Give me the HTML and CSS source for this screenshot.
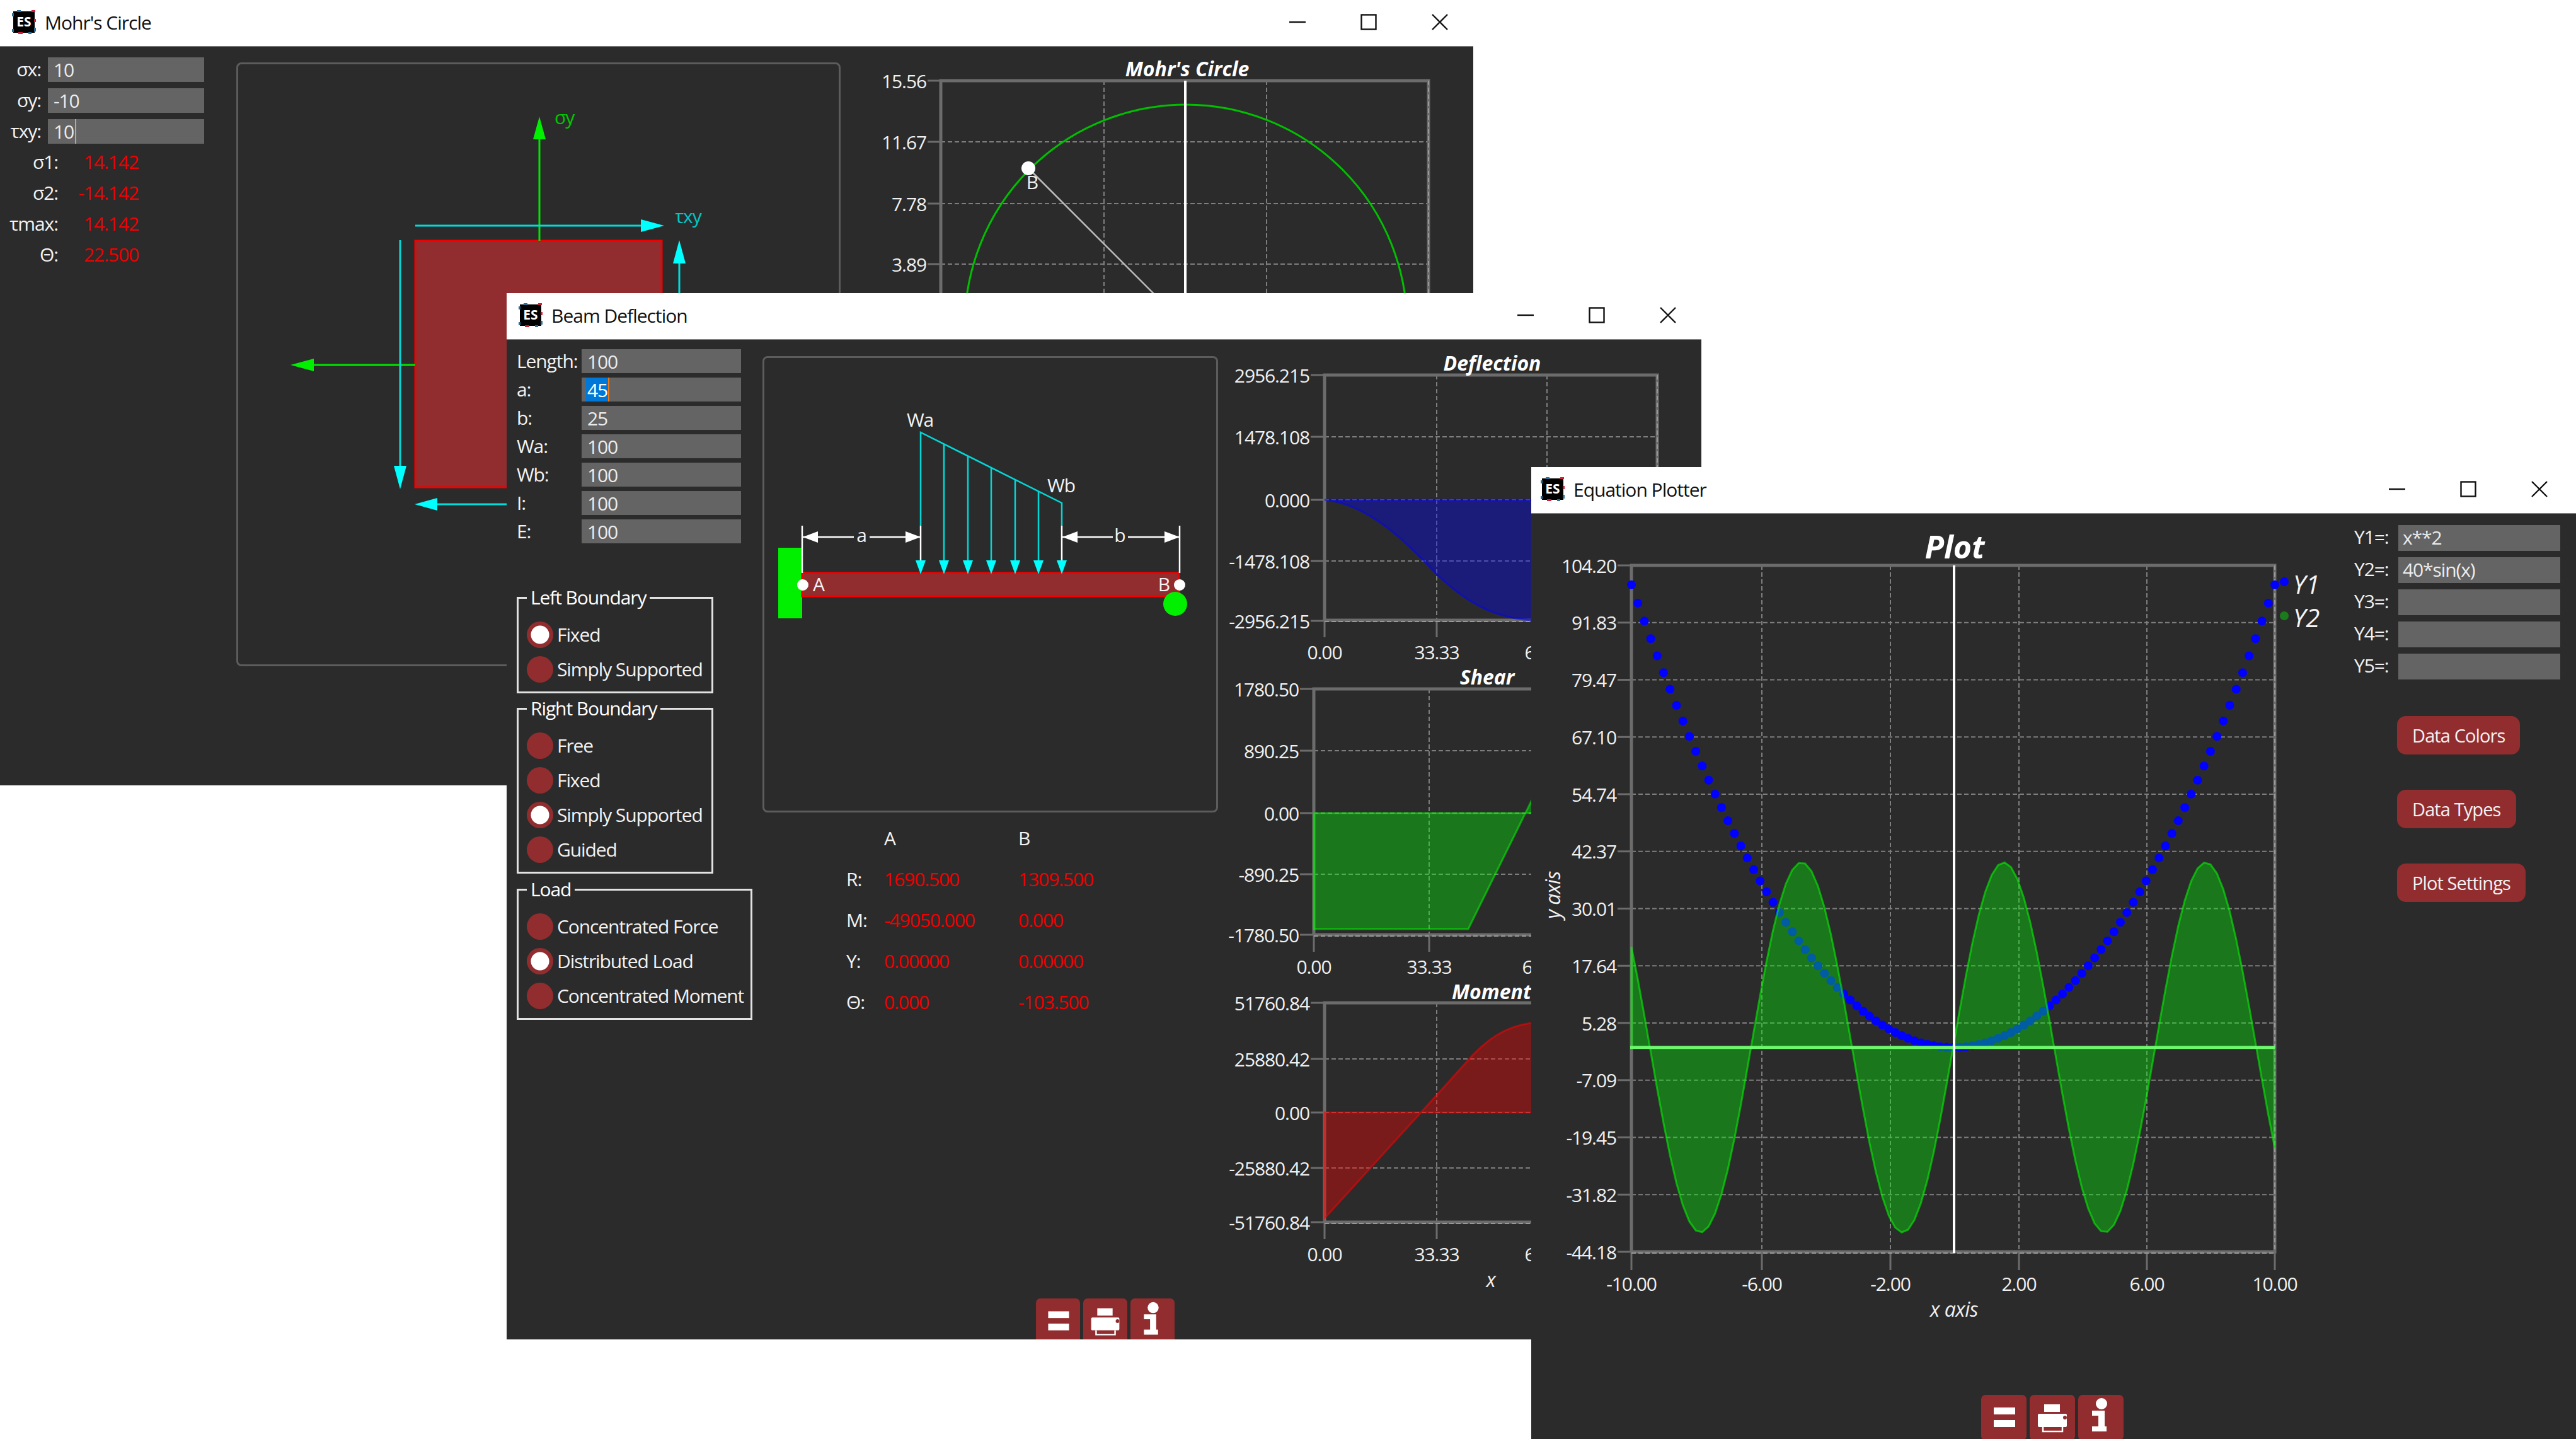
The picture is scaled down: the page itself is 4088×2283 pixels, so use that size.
FILE: index.html
```html
<!DOCTYPE html>
<html lang="en">
<head>
    <title>Engineering Solvers</title>
    <link rel="stylesheet" href="styles.css">
</head>
<body>

    <svg class="defs">
        <symbol id="appIcon" viewBox="0 0 38 38">
            <rect x="2" y="2" width="34" height="34" fill="#000"/>
            <rect x="0" y="5" width="3" height="5" fill="#2b6f96"/>
            <rect x="8" y="0" width="6" height="3" fill="#2b6f96"/>
            <rect x="31" y="0" width="6" height="3" fill="#d0213a"/>
            <rect x="35" y="14" width="3" height="5" fill="#d0213a"/>
            <rect x="35" y="28" width="3" height="6" fill="#2b6f96"/>
            <rect x="0" y="30" width="3" height="5" fill="#2b6f96"/>
            <rect x="10" y="35" width="7" height="3" fill="#d0213a"/>
            <rect x="26" y="35" width="5" height="3" fill="#2b6f96"/>
        </symbol>
        <symbol id="capMin" viewBox="0 0 26 26"><line x1="0" y1="13" x2="26" y2="13" stroke="#111" stroke-width="2.4"/></symbol>
        <symbol id="capMax" viewBox="0 0 26 26"><rect x="1.5" y="1.5" width="23" height="23" fill="none" stroke="#111" stroke-width="2.4"/></symbol>
        <symbol id="capClose" viewBox="0 0 26 26"><path d="M1 1L25 25M25 1L1 25" fill="none" stroke="#111" stroke-width="2.4"/></symbol>
        <symbol id="iconEquals" viewBox="0 0 72 72">
            <rect x="20" y="20" width="34" height="11" fill="#fff"/>
            <rect x="20" y="40" width="34" height="11" fill="#fff"/>
        </symbol>
        <symbol id="iconPrint" viewBox="0 0 72 72">
            <rect x="23" y="15" width="25" height="12" fill="#fff"/>
            <rect x="13" y="30" width="46" height="21" rx="2" fill="#fff"/>
            <circle cx="56" cy="36" r="3" fill="#922d2f"/>
            <path d="M21 51V58H52V51" fill="none" stroke="#fff" stroke-width="2.5"/>
        </symbol>
        <symbol id="iconInfo" viewBox="0 0 72 72">
            <circle cx="37" cy="14" r="9" fill="#fff"/>
            <path d="M22 25H42V50H45V58H22V50H32V33H22Z" fill="#fff"/>
        </symbol>
    </svg>

    <!-- Mohr's circle -->
    <div class="window win-mohr">
        <div class="titlebar">
            <svg class="app-icon" viewBox="0 0 38 38"><use href="#appIcon" width="38" height="38"/><text x="19" y="26" class="es-text">ES</text></svg>
            <span class="title-text">Mohr's Circle</span>
            <div class="caption">
                <div class="cap-btn"><svg><use href="#capMin"/></svg></div>
                <div class="cap-btn"><svg><use href="#capMax"/></svg></div>
                <div class="cap-btn"><svg><use href="#capClose"/></svg></div>
            </div>
        </div>
        <div class="win-body">
            <div class="mohr-panel">
                <div class="mohr-inputs">
                    <label>σx:</label><div class="field">10</div>
                    <label>σy:</label><div class="field">-10</div>
                    <label>τxy:</label><div class="field">10<span class="caret"></span></div>
                </div>
                <div class="mohr-results">
                    <label>σ1:</label><span class="value">14.142</span>
                    <label>σ2:</label><span class="value">-14.142</span>
                    <label>τmax:</label><span class="value">14.142</span>
                    <label>Θ:</label><span class="value">22.500</span>
                </div>
            </div>
            <div class="sketch sketch-mohr">
                <svg viewBox="378 102 953 952" width="953" height="952">
                    <rect x="659" y="382" width="391" height="391" fill="#922d2f" stroke="#f00000" stroke-width="3"/>
                    <g class="arrow-green">
                        <line x1="856" y1="382" x2="856" y2="200"/>
                        <polygon points="856,185 866,221 846,221"/>
                        <line x1="659" y1="579" x2="485" y2="579"/>
                        <polygon points="461,579 498,569 498,589"/>
                    </g>
                    <g class="arrow-cyan">
                        <line x1="659" y1="358" x2="1030" y2="358"/>
                        <polygon points="1054,358 1017,348 1017,368"/>
                        <line x1="1078" y1="400" x2="1078" y2="773"/>
                        <polygon points="1078,381 1088,418 1068,418"/>
                        <line x1="635" y1="381" x2="635" y2="760"/>
                        <polygon points="635,776 625,739 645,739"/>
                        <line x1="680" y1="800" x2="1050" y2="800"/>
                        <polygon points="658,800 694,790 694,810"/>
                    </g>
                    <text x="880" y="197" class="sk-label green">σy</text>
                    <text x="1071" y="354" class="sk-label cyan">τxy</text>
                </svg>
            </div>
            <svg id="mohrPlot" class="plot-svg" viewBox="1332 74 1006 1172" width="1006" height="1172"></svg>
        </div>
    </div>

    <!-- Beam deflection -->
    <div class="window win-beam">
        <div class="titlebar">
            <svg class="app-icon" viewBox="0 0 38 38"><use href="#appIcon" width="38" height="38"/><text x="19" y="26" class="es-text">ES</text></svg>
            <span class="title-text">Beam Deflection</span>
            <div class="caption">
                <div class="cap-btn"><svg><use href="#capMin"/></svg></div>
                <div class="cap-btn"><svg><use href="#capMax"/></svg></div>
                <div class="cap-btn"><svg><use href="#capClose"/></svg></div>
            </div>
        </div>
        <div class="win-body">
            <div class="beam-panel">
                <div class="beam-inputs">
                    <label>Length:</label><div class="field">100</div>
                    <label>a:</label><div class="field"><span class="sel">45</span><span class="caret caret-sel"></span></div>
                    <label>b:</label><div class="field">25</div>
                    <label>Wa:</label><div class="field">100</div>
                    <label>Wb:</label><div class="field">100</div>
                    <label>I:</label><div class="field">100</div>
                    <label>E:</label><div class="field">100</div>
                </div>

                <fieldset class="group group-left">
                    <legend>Left Boundary</legend>
                    <label class="radio"><input type="radio" name="left" checked>Fixed</label>
                    <label class="radio"><input type="radio" name="left">Simply Supported</label>
                </fieldset>
                <fieldset class="group group-right">
                    <legend>Right Boundary</legend>
                    <label class="radio"><input type="radio" name="right">Free</label>
                    <label class="radio"><input type="radio" name="right">Fixed</label>
                    <label class="radio"><input type="radio" name="right" checked>Simply Supported</label>
                    <label class="radio"><input type="radio" name="right">Guided</label>
                </fieldset>
                <fieldset class="group group-load">
                    <legend>Load</legend>
                    <label class="radio"><input type="radio" name="load">Concentrated Force</label>
                    <label class="radio"><input type="radio" name="load" checked>Distributed Load</label>
                    <label class="radio"><input type="radio" name="load">Concentrated Moment</label>
                </fieldset>
            </div>

            <div class="beam-middle">
                <div class="sketch sketch-beam">
                    <svg viewBox="1213 568 717 718" width="717" height="718">
                        <rect x="1235" y="869" width="38" height="112" fill="#00f000"/>
                        <rect x="1273" y="909" width="598" height="37" fill="#922d2f" stroke="#f00000" stroke-width="3"/>
                        <circle cx="1865" cy="958" r="19" fill="#00f000"/>
                        <polyline class="line-cyan" points="1461,834 1461,686 1685,798 1685,834"/>
                        <g class="line-cyan">
                            <line x1="1498" y1="705" x2="1498" y2="895"/>
                            <line x1="1536" y1="724" x2="1536" y2="895"/>
                            <line x1="1573" y1="742" x2="1573" y2="895"/>
                            <line x1="1611" y1="761" x2="1611" y2="895"/>
                            <line x1="1648" y1="780" x2="1648" y2="895"/>
                        </g>
                        <g class="line-white">
                            <line x1="1273" y1="834" x2="1273" y2="909"/>
                            <line x1="1461" y1="834" x2="1461" y2="895"/>
                            <line x1="1685" y1="834" x2="1685" y2="895"/>
                            <line x1="1872" y1="834" x2="1872" y2="909"/>
                            <line x1="1273" y1="852" x2="1355" y2="852"/>
                            <line x1="1380" y1="852" x2="1461" y2="852"/>
                            <line x1="1685" y1="852" x2="1766" y2="852"/>
                            <line x1="1790" y1="852" x2="1872" y2="852"/>
                        </g>
                        <g fill="#fff">
                            <polygon points="1274,852 1298,843 1298,861"/>
                            <polygon points="1461,852 1437,843 1437,861"/>
                            <polygon points="1686,852 1710,843 1710,861"/>
                            <polygon points="1872,852 1848,843 1848,861"/>
                        </g>
                        <g fill="#00ffff">
                            <polygon points="1461,911 1453,889 1469,889"/>
                            <polygon points="1498,911 1490,889 1506,889"/>
                            <polygon points="1536,911 1528,889 1544,889"/>
                            <polygon points="1573,911 1565,889 1581,889"/>
                            <polygon points="1611,911 1603,889 1619,889"/>
                            <polygon points="1648,911 1640,889 1656,889"/>
                            <polygon points="1685,911 1677,889 1693,889"/>
                        </g>
                        <circle cx="1274" cy="928" r="9" fill="#fff"/>
                        <circle cx="1872" cy="928" r="9" fill="#fff"/>
                        <text x="1299" y="938" class="sk-label mid">A</text>
                        <text x="1847" y="938" class="sk-label mid">B</text>
                        <text x="1460" y="677" class="sk-label mid">Wa</text>
                        <text x="1684" y="781" class="sk-label mid">Wb</text>
                        <text x="1367" y="860" class="sk-label mid">a</text>
                        <text x="1777" y="860" class="sk-label mid">b</text>
                    </svg>
                </div>
                <div class="results">
                    <span></span><span class="head">A</span><span class="head">B</span>
                    <span>R:</span><span class="value">1690.500</span><span class="value">1309.500</span>
                    <span>M:</span><span class="value">-49050.000</span><span class="value">0.000</span>
                    <span>Y:</span><span class="value">0.00000</span><span class="value">0.00000</span>
                    <span>Θ:</span><span class="value">0.000</span><span class="value">-103.500</span>
                </div>
                <div class="tools tools-beam">
                    <button class="tool-btn"><svg><use href="#iconEquals"/></svg></button>
                    <button class="tool-btn"><svg><use href="#iconPrint"/></svg></button>
                    <button class="tool-btn"><svg><use href="#iconInfo"/></svg></button>
                </div>
            </div>

            <svg id="beamPlots" class="plot-svg beam-plots" viewBox="1940 539 760 1586" width="760" height="1586"></svg>
        </div>
    </div>

    <!-- Equation plotter -->
    <div class="window win-plot">
        <div class="titlebar">
            <svg class="app-icon" viewBox="0 0 38 38"><use href="#appIcon" width="38" height="38"/><text x="19" y="26" class="es-text">ES</text></svg>
            <span class="title-text">Equation Plotter</span>
            <div class="caption">
                <div class="cap-btn"><svg><use href="#capMin"/></svg></div>
                <div class="cap-btn"><svg><use href="#capMax"/></svg></div>
                <div class="cap-btn"><svg><use href="#capClose"/></svg></div>
            </div>
        </div>
        <div class="win-body">
            <div class="plot-main">
                <svg id="eqPlot" class="plot-svg" viewBox="2430 814 1290 1398" width="1290" height="1398"></svg>
                <div class="tools tools-plot">
                    <button class="tool-btn"><svg><use href="#iconEquals"/></svg></button>
                    <button class="tool-btn"><svg><use href="#iconPrint"/></svg></button>
                    <button class="tool-btn"><svg><use href="#iconInfo"/></svg></button>
                </div>
            </div>
            <div class="plot-side">
                <div class="eq-inputs">
                    <label>Y1=:</label><div class="field">x**2</div>
                    <label>Y2=:</label><div class="field">40*sin(x)</div>
                    <label>Y3=:</label><div class="field"></div>
                    <label>Y4=:</label><div class="field"></div>
                    <label>Y5=:</label><div class="field"></div>
                </div>
                <div class="side-buttons">
                    <button class="side-btn btn-colors">Data Colors</button>
                    <button class="side-btn btn-types">Data Types</button>
                    <button class="side-btn btn-settings">Plot Settings</button>
                </div>
            </div>
        </div>
    </div>

    <script src="charts.js"></script>
</body>
</html>
```

FILE: styles.css
```css
html, body {
    margin: 0;
    padding: 0;
}
body {
    width: 4088px;
    height: 2283px;
    background-color: #fff;
    overflow: hidden;
    position: relative;
    font-family: "Open Sans", "Noto Sans", sans-serif;
    font-size: 30px;
    letter-spacing: -1.1px;
    color: #f2f2f2;
}
.defs {
    position: absolute;
    width: 0;
    height: 0;
}
.es-text {
    font-weight: 700;
    font-size: 21px;
    letter-spacing: 0;
    fill: #fff;
    text-anchor: middle;
}

/* windows */
.window {
    position: absolute;
    display: flex;
    flex-direction: column;
    overflow: hidden;
    background-color: #2b2b2b;
}
.win-mohr { left: 0; top: 0; width: 2338px; height: 1246px; }
.win-beam { left: 804px; top: 465px; width: 1896px; height: 1660px; }
.win-plot { left: 2430px; top: 741px; width: 1658px; height: 1542px; }

.titlebar {
    flex: none;
    box-sizing: border-box;
    height: 74px;
    display: flex;
    align-items: center;
    background-color: #fff;
    border-bottom: 1px solid #8a8a8a;
    padding: 0 0 3px 19px;
}
.win-plot .titlebar {
    padding-left: 15px;
}
.app-icon {
    width: 38px;
    height: 38px;
    margin-right: 14px;
}
.title-text {
    letter-spacing: -1px;
    color: #111;
    white-space: nowrap;
}
.caption {
    display: flex;
    margin-left: auto;
    margin-right: -3px;
}
.win-plot .caption {
    margin-right: 2px;
}
.cap-btn {
    width: 113px;
    height: 60px;
    display: flex;
    align-items: center;
    justify-content: center;
}
.cap-btn svg {
    width: 26px;
    height: 26px;
}

.win-body {
    flex: 1;
    display: flex;
    min-height: 0;
}
.plot-svg {
    flex: none;
    display: block;
}

/* form pieces */
.field {
    background-color: #646464;
    color: #ececec;
    padding-left: 9px;
    display: flex;
    align-items: center;
    white-space: nowrap;
}
.caret {
    width: 2px;
    height: 100%;
    background-color: #aaa;
    margin-left: 2px;
}
.sel {
    background-color: #0078d7;
    color: #fff;
    height: 100%;
    display: flex;
    align-items: center;
    margin-left: -2px;
    padding: 0 1px 0 2px;
}
.caret-sel {
    background-color: #e87a1c;
    margin-left: 0;
}
.value {
    color: #f00000;
}
.sketch {
    flex: none;
    border: 3px solid #5c5c5c;
    border-radius: 8px;
}
.sketch svg {
    display: block;
}
.sk-label {
    font-size: 30px;
    fill: #f2f2f2;
}
.sk-label.mid { text-anchor: middle; }
.sk-label.green { fill: #00c800; }
.sk-label.cyan { fill: #00c8c8; }
.arrow-green line { stroke: #00e600; stroke-width: 3; }
.arrow-green polygon { fill: #00f000; }
.arrow-cyan line { stroke: #00dcdc; stroke-width: 3; }
.arrow-cyan polygon { fill: #00ffff; }
.line-cyan, .line-cyan line { fill: none; stroke: #00d8d8; stroke-width: 2.5; }
.line-white line { stroke: #fff; stroke-width: 2.5; }

/* mohr panel */
.mohr-panel {
    flex: none;
    width: 377px;
    padding-top: 17px;
    box-sizing: border-box;
}
.mohr-inputs {
    display: grid;
    grid-template-columns: 65px 248px;
    grid-auto-rows: 39px;
    column-gap: 11px;
    row-gap: 10px;
}
.mohr-inputs label, .mohr-results label {
    text-align: right;
    line-height: 37px;
}
.mohr-results {
    display: grid;
    grid-template-columns: 92px 128px;
    grid-auto-rows: 39px;
    row-gap: 10px;
    margin-top: 10px;
}
.mohr-results .value {
    text-align: right;
    line-height: 37px;
}
.sketch-mohr {
    margin: 25px 0 0 -2px;
    width: 953px;
    height: 952px;
}
#mohrPlot {
    margin-left: -2px;
}

/* beam panel */
.beam-panel {
    flex: none;
    width: 408px;
    padding: 15px 0 0 16px;
    box-sizing: border-box;
}
.beam-inputs {
    display: grid;
    grid-template-columns: 103px 253px;
    grid-auto-rows: 38px;
    row-gap: 7px;
}
.beam-inputs label {
    line-height: 38px;
}
.group {
    margin: 0;
    padding: 17px 13px 8px;
    border: 3px solid #e2e2e2;
    display: flex;
    flex-direction: column;
    box-sizing: border-box;
    min-width: 0;
}
.group legend {
    padding: 0 6px;
    line-height: 28px;
    color: #fff;
    white-space: nowrap;
}
.group-left { width: 312px; margin-top: 72px; }
.group-right { width: 312px; margin-top: 10px; }
.group-load { width: 374px; margin-top: 11px; }
.radio {
    height: 55px;
    display: flex;
    align-items: center;
    gap: 6px;
    white-space: nowrap;
}
.radio input {
    appearance: none;
    flex: none;
    width: 42px;
    height: 42px;
    margin: 0;
    border-radius: 50%;
    background-color: #922d2f;
}
.radio input:checked {
    background: radial-gradient(circle, #fff 0, #fff 14px, #922d2f 15px);
}

.beam-middle {
    flex: none;
    width: 719px;
    padding-top: 26px;
    box-sizing: border-box;
}
.sketch-beam {
    margin-left: -2px;
    width: 717px;
    height: 718px;
}
.results {
    display: grid;
    grid-template-columns: 60px 213px 200px;
    grid-auto-rows: 65px;
    align-items: center;
    padding-left: 131px;
    margin-top: 8px;
    white-space: nowrap;
}
.tools {
    display: flex;
    gap: 5px;
}
.tools-beam {
    margin: 438px 0 0 432px;
}
.tool-btn {
    width: 70px;
    height: 72px;
    padding: 0;
    border: none;
    border-radius: 7px;
    background-color: #922d2f;
}
.tool-btn svg {
    display: block;
    width: 100%;
    height: 100%;
}
.beam-plots {
    margin-left: 9px;
}

/* plotter */
.plot-main {
    flex: none;
    width: 1290px;
}
.tools-plot {
    margin-left: 714px;
}
.tools-plot .tool-btn {
    width: 72px;
}
.plot-side {
    flex: none;
    padding: 18px 0 0 16px;
}
.eq-inputs {
    display: grid;
    grid-template-columns: 70px 257px;
    grid-auto-rows: 41px;
    row-gap: 10px;
}
.eq-inputs label {
    line-height: 38px;
}
.eq-inputs .field {
    padding: 0 0 3px 7px;
}
.side-buttons {
    display: flex;
    flex-direction: column;
    align-items: flex-start;
    gap: 56px;
    margin: 58px 0 0 68px;
}
.side-btn {
    height: 61px;
    padding: 0 24px;
    border: none;
    border-radius: 14px;
    background-color: #922d2f;
    color: #f2f2f2;
    font-family: "Open Sans", sans-serif;
    font-size: 29px;
    letter-spacing: -0.9px;
    white-space: nowrap;
}

/* chart text and strokes */
.tick-label {
    font-size: 30px;
    fill: #f0f0f0;
    dominant-baseline: central;
}
.tick-label.end { text-anchor: end; }
.tick-label.middle { text-anchor: middle; }
.chart-title {
    font-size: 32px;
    font-weight: 700;
    font-style: italic;
    letter-spacing: 0;
    fill: #fff;
    text-anchor: middle;
    dominant-baseline: central;
}
.chart-title.big { font-size: 50px; }
.axis-label {
    font-size: 32px;
    font-style: italic;
    letter-spacing: -0.5px;
    fill: #f0f0f0;
    text-anchor: middle;
    dominant-baseline: central;
}
.legend-label {
    font-size: 40px;
    font-style: italic;
    letter-spacing: 0;
    fill: #f4f4f4;
    dominant-baseline: central;
}
.frame { stroke: #6c6c6c; stroke-width: 5; fill: none; }
.stub { stroke: #6c6c6c; stroke-width: 3; }
.grid-line { stroke: #7e7e7e; stroke-width: 2; stroke-dasharray: 7 4; }
.frame-dash { stroke: #989898; stroke-width: 2; stroke-dasharray: 7 4; }
.center-line { stroke: #fff; stroke-width: 4; }
.fill-blue { fill: rgba(0, 0, 255, 0.37); stroke: rgba(0, 0, 255, 0.5); stroke-width: 3; }
.fill-green { fill: rgba(0, 255, 0, 0.36); stroke: rgba(0, 255, 0, 0.5); stroke-width: 3; }
.fill-red { fill: rgba(255, 0, 0, 0.37); stroke: rgba(255, 0, 0, 0.5); stroke-width: 3; }
.sine-fill { fill: rgba(0, 255, 0, 0.36); }
.sine-line { fill: none; stroke: rgba(0, 255, 0, 0.55); stroke-width: 3; }
.base-line { stroke: #6df76d; stroke-width: 5; }
.dot { fill: #0000ff; }
.circle-line { fill: none; stroke: #00c000; stroke-width: 3; }
.radius-line { stroke: #bdbdbd; stroke-width: 2.5; }
```

FILE: charts.js
```js
const NS = 'http://www.w3.org/2000/svg';

function add(parent, tag, attrs, text) {
    const node = document.createElementNS(NS, tag);
    for (const key in attrs) {
        node.setAttribute(key, attrs[key]);
    }
    if (text !== undefined) {
        node.textContent = text;
    }
    parent.appendChild(node);
    return node;
}

function line(parent, x1, y1, x2, y2, cls) {
    return add(parent, 'line', { x1, y1, x2, y2, class: cls });
}

// ticks: yTicks and xTicks are [position, label] pairs in page pixels
function drawAxes(svg, c) {
    c.yTicks.forEach(([y]) => {
        line(svg, c.left, y, c.right, y, 'grid-line');
        line(svg, c.labelX + 2, y, c.left, y, 'stub');
    });
    c.xTicks.forEach(([x]) => {
        line(svg, x, c.top, x, c.bottom, 'grid-line');
        line(svg, x, c.bottom, x, c.bottom + c.stub, 'stub');
    });
    add(svg, 'path', { class: 'frame', d: `M${c.left} ${c.bottom}V${c.top}H${c.right}V${c.bottom}H${c.left}` });
    line(svg, c.right, c.top, c.right, c.bottom, 'frame-dash');
    line(svg, c.left, c.bottom + 2, c.right, c.bottom + 2, 'frame-dash');
}

function drawLabels(svg, c) {
    c.yTicks.forEach(([y, label]) => {
        if (label) add(svg, 'text', { x: c.labelX, y, class: 'tick-label end' }, label);
    });
    c.xTicks.forEach(([x, label]) => {
        if (label) add(svg, 'text', { x, y: c.xLabelY, class: 'tick-label middle' }, label);
    });
    add(svg, 'text', { x: c.titleX, y: c.titleY, class: 'chart-title' + (c.big ? ' big' : '') }, c.title);
}

function drawMohr() {
    const svg = document.getElementById('mohrPlot');
    const c = {
        left: 1493, right: 2267, top: 128, bottom: 905, stub: 25,
        labelX: 1470, xLabelY: 950,
        title: "Mohr's Circle", titleX: 1884, titleY: 108,
        yTicks: [[128, '15.56'], [225, '11.67'], [323, '7.78'], [419, '3.89']],
        xTicks: [[1752], [2010]]
    };
    drawAxes(svg, c);
    add(svg, 'circle', { cx: 1882, cy: 517, r: 351, class: 'circle-line' });
    line(svg, 1632, 267, 1882, 517, 'radius-line');
    line(svg, 1881, 128, 1881, 905, 'center-line');
    add(svg, 'circle', { cx: 1632, cy: 267, r: 11, fill: '#fff' });
    add(svg, 'text', { x: 1638, y: 288, class: 'tick-label middle' }, 'B');
    drawLabels(svg, c);
}

function drawBeam() {
    const svg = document.getElementById('beamPlots');

    const deflection = {
        left: 2102, right: 2630, top: 595, bottom: 984, stub: 27,
        labelX: 2078, xLabelY: 1034,
        title: 'Deflection', titleX: 2368, titleY: 575,
        yTicks: [[595, '2956.215'], [693, '1478.108'], [793, '0.000'], [890, '-1478.108'], [985, '-2956.215']],
        xTicks: [[2280, '33.33'], [2455, '66.67'], [2102, '0.00']]
    };
    drawAxes(svg, deflection);
    add(svg, 'path', { class: 'fill-blue', d: 'M2102 793C2180 800 2250 880 2280 911C2320 950 2370 984 2440 984L2440 793Z' });
    drawLabels(svg, deflection);

    const shear = {
        left: 2085, right: 2630, top: 1093, bottom: 1483, stub: 27,
        labelX: 2061, xLabelY: 1533,
        title: 'Shear', titleX: 2360, titleY: 1073,
        yTicks: [[1093, '1780.50'], [1191, '890.25'], [1290, '0.00'], [1387, '-890.25'], [1483, '-1780.50']],
        xTicks: [[2268, '33.33'], [2451, '66.67'], [2085, '0.00']]
    };
    drawAxes(svg, shear);
    add(svg, 'path', { class: 'fill-green', d: 'M2085 1290L2085 1474L2330 1474L2440 1251L2440 1290Z' });
    drawLabels(svg, shear);

    const moment = {
        left: 2102, right: 2630, top: 1591, bottom: 1939, stub: 27,
        labelX: 2078, xLabelY: 1989,
        title: 'Moment', titleX: 2367, titleY: 1572,
        yTicks: [[1591, '51760.84'], [1680, '25880.42'], [1765, '0.00'], [1853, '-25880.42'], [1939, '-51760.84']],
        xTicks: [[2280, '33.33'], [2455, '66.67'], [2102, '0.00']]
    };
    drawAxes(svg, moment);
    add(svg, 'path', { class: 'fill-red', d: 'M2102 1765L2102 1933L2255 1765L2338 1673C2370 1640 2400 1625 2440 1622L2440 1765Z' });
    drawLabels(svg, moment);

    add(svg, 'text', { x: 2366, y: 2029, class: 'axis-label' }, 'x');
}

function drawEquation() {
    const svg = document.getElementById('eqPlot');
    const px = (x) => 2589 + (x + 10) * 51.05;
    const py = (v) => 896 + (104.2 - v) * 7.339;
    const yLabels = ['104.20', '91.83', '79.47', '67.10', '54.74', '42.37', '30.01', '17.64', '5.28', '-7.09', '-19.45', '-31.82', '-44.18'];
    const c = {
        left: 2589, right: 3610, top: 896, bottom: 1985, stub: 29,
        labelX: 2565, xLabelY: 2035,
        title: 'Plot', titleX: 3102, titleY: 866, big: true,
        yTicks: yLabels.map((label, i) => [896 + i * 90.75, label]),
        xTicks: [[2589, '-10.00'], [2796, '-6.00'], [3000, '-2.00'], [3204, '2.00'], [3407, '6.00'], [3610, '10.00']]
    };
    drawAxes(svg, c);

    const samples = [];
    for (let i = 0; i <= 100; i++) {
        samples.push(-10 + i * 0.2);
    }
    samples.forEach((x) => {
        add(svg, 'ellipse', { cx: px(x), cy: py(x * x), rx: 7, ry: 7, class: 'dot' });
    });

    const sine = samples.map((x) => `${px(x).toFixed(1)},${py(40 * Math.sin(x)).toFixed(1)}`).join(' ');
    add(svg, 'polygon', { class: 'sine-fill', points: `${px(-10)},${py(0)} ${sine} ${px(10)},${py(0)}` });
    add(svg, 'polyline', { class: 'sine-line', points: `${px(-10)},${py(0)} ${sine}` });
    line(svg, 2587, py(0), 3610, py(0), 'base-line');
    line(svg, 3101, 896, 3101, 1987, 'center-line');

    add(svg, 'circle', { cx: 3625, cy: 922, r: 7, class: 'dot' });
    add(svg, 'text', { x: 3639, y: 925, class: 'legend-label' }, 'Y1');
    add(svg, 'circle', { cx: 3625, cy: 976, r: 7, fill: '#1b7a1b' });
    add(svg, 'text', { x: 3639, y: 978, class: 'legend-label' }, 'Y2');

    add(svg, 'text', { x: 3101, y: 2075, class: 'axis-label' }, 'x axis');
    add(svg, 'text', { x: 2463, y: 1419, class: 'axis-label', transform: 'rotate(-90 2463 1419)' }, 'y axis');
    drawLabels(svg, c);
}

drawMohr();
drawBeam();
drawEquation();
```
